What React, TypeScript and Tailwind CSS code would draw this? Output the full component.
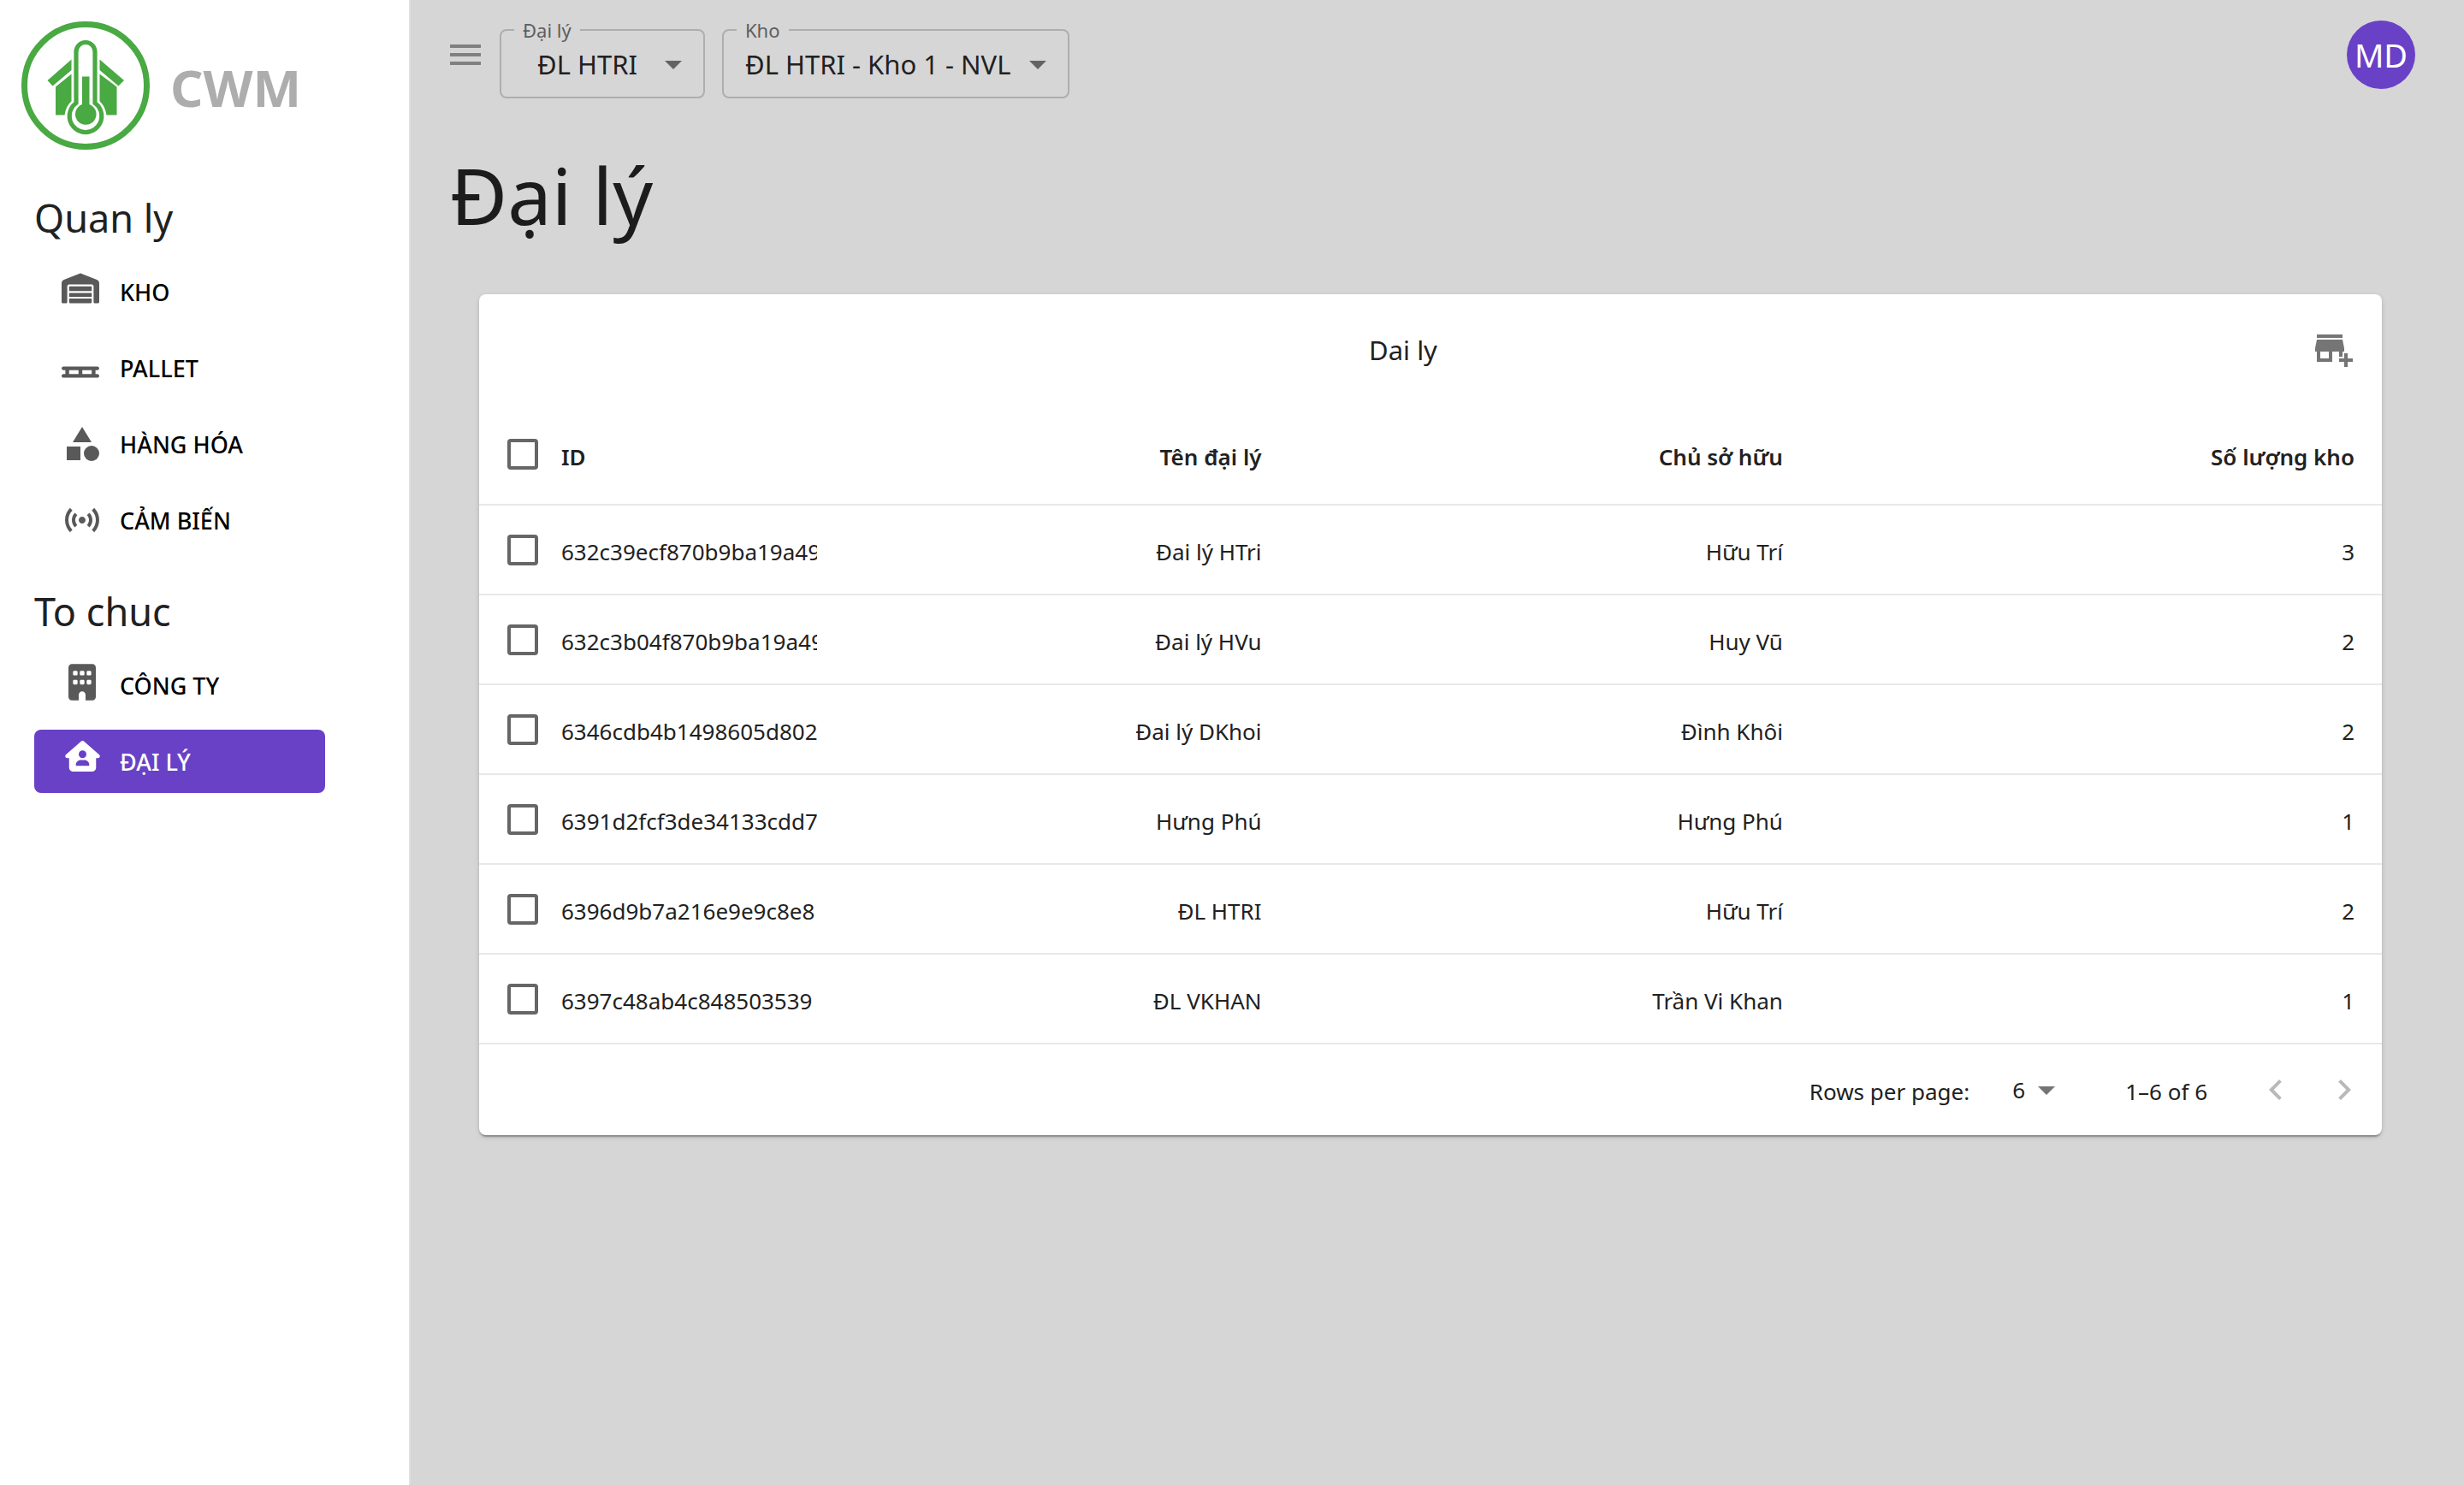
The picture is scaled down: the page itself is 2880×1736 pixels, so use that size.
import React, { useState } from "react";
import { FaBuilding, FaHouseUser, FaPallet, FaWarehouse } from "react-icons/fa6";
import {
  MdAddBusiness,
  MdArrowDropDown,
  MdCategory,
  MdKeyboardArrowLeft,
  MdKeyboardArrowRight,
  MdMenu,
  MdSensors,
} from "react-icons/md";

type NavItem = { label: string; icon: React.ReactNode; active?: boolean };

const manageItems: NavItem[] = [
  { label: "KHO", icon: <FaWarehouse className="mr-1 mb-2 h-9 w-[45px]" /> },
  { label: "PALLET", icon: <FaPallet className="mr-1 mb-3 h-9 w-[45px]" /> },
  { label: "HÀNG HÓA", icon: <MdCategory className="size-12" /> },
  { label: "CẢM BIẾN", icon: <MdSensors className="size-12" /> },
];

const orgItems: NavItem[] = [
  { label: "CÔNG TY", icon: <FaBuilding className="mb-2 h-[43px] w-8" /> },
  { label: "ĐẠI LÝ", icon: <FaHouseUser className="mb-3 h-9 w-[41px]" />, active: true },
];

const rows = [
  { id: "632c39ecf870b9ba19a49", name: "Đai lý HTri", owner: "Hữu Trí", count: 3 },
  { id: "632c3b04f870b9ba19a49", name: "Đai lý HVu", owner: "Huy Vũ", count: 2 },
  { id: "6346cdb4b1498605d802", name: "Đai lý DKhoi", owner: "Đình Khôi", count: 2 },
  { id: "6391d2fcf3de34133cdd7", name: "Hưng Phú", owner: "Hưng Phú", count: 1 },
  { id: "6396d9b7a216e9e9c8e8", name: "ĐL HTRI", owner: "Hữu Trí", count: 2 },
  { id: "6397c48ab4c848503539", name: "ĐL VKHAN", owner: "Trần Vi Khan", count: 1 },
];

function Logo() {
  return (
    <svg viewBox="0 0 150 150" className="size-[150px] shrink-0" aria-hidden="true">
      <circle cx="75" cy="75" r="71.5" fill="none" stroke="#49a942" strokeWidth="7" />
      <g fill="#49a942">
        <path d="M58.500 44.500V57L36.500 75.500 30.500 69z" />
        <path d="M91.500 44.500V57L113.500 75.500 120 69z" />
        <path d="M58.500 61.500V93.500C54 97.500 51.500 103 50.500 109.500H40V76.500z" />
        <path d="M91.500 61.500V93.500C96 97.500 98.500 103 99.500 109.500H111.500V76.500z" />
      </g>
      <path
        d="M64 95.500V35.500a11 11 0 0 1 22 0V95.500a18.800 18.800 0 1 1 -22 0z"
        fill="#fff"
        stroke="#fff"
        strokeWidth="10"
      />
      <path
        d="M64 95.500V35.500a11 11 0 0 1 22 0V95.500a18.800 18.800 0 1 1 -22 0z"
        fill="#fff"
        stroke="#49a942"
        strokeWidth="5.200"
      />
      <path d="M71 64.500h8.500V97a12.300 12.300 0 1 1 -8.500 0z" fill="#49a942" />
    </svg>
  );
}

function NavSection({ title, items }: { title: string; items: NavItem[] }) {
  return (
    <section>
      <h2 className="text-[45px] leading-[60px]">{title}</h2>
      <ul className="mt-[19px] flex flex-col gap-[15px]">
        {items.map((item) => (
          <li key={item.label}>
            <a
              href="#"
              className={
                item.active
                  ? "flex h-[74px] items-center gap-5 rounded-lg bg-[#6941c6] px-8 text-white"
                  : "flex h-[74px] items-center gap-5 rounded-lg px-8 text-black"
              }
            >
              <span
                className={
                  item.active
                    ? "flex w-12 justify-center text-white"
                    : "flex w-12 justify-center text-[#595959]"
                }
              >
                {item.icon}
              </span>
              <span className="pt-0.5 text-[27px] font-medium">{item.label}</span>
            </a>
          </li>
        ))}
      </ul>
    </section>
  );
}

function OutlinedSelect({
  id,
  label,
  value,
  className,
}: {
  id: string;
  label: string;
  value: string;
  className: string;
}) {
  return (
    <fieldset className="rounded-lg border-2 border-[#aeaeae] pb-3.5">
      <legend className="ml-[15px] px-2.5 text-[22px] leading-8 text-[#5e5e5e]">
        <label htmlFor={id}>{label}</label>
      </legend>
      <div className="relative">
        <select
          id={id}
          className={"h-12 appearance-none bg-transparent text-[31px] leading-[48px] " + className}
        >
          <option>{value}</option>
        </select>
        <MdArrowDropDown className="pointer-events-none absolute top-0 right-[11px] size-12 text-[#636363]" />
      </div>
    </fieldset>
  );
}

function CheckBox({ label }: { label: string }) {
  return (
    <input
      type="checkbox"
      aria-label={label}
      className="ml-[33px] block size-9 appearance-none rounded border-4 border-[#666666] checked:bg-[#6941c6]"
    />
  );
}

export default function App() {
  const [open, setOpen] = useState(true);

  return (
    <div className="flex min-h-screen bg-[#d6d6d6] font-['Noto_Sans',sans-serif] text-[#212121]">
      {open && (
        <aside className="w-[480px] shrink-0 border-r-2 border-[#e0e0e0] bg-white">
          <div className="flex items-center gap-6 pt-[25px] pl-[25px]">
            <Logo />
            <span className="pt-1 text-[60px] font-bold text-[#adadad]">CWM</span>
          </div>
          <nav className="mt-[50px] flex w-[380px] flex-col gap-10 pl-10">
            <NavSection title="Quan ly" items={manageItems} />
            <NavSection title="To chuc" items={orgItems} />
          </nav>
        </aside>
      )}

      <main className="min-w-0 flex-1">
        <header className="flex items-start pt-[19px] pr-[57px] pl-10">
          <button
            type="button"
            aria-label="Menu"
            onClick={() => setOpen(!open)}
            className="mt-[21px] mr-4 text-[#808080]"
          >
            <MdMenu className="size-12" />
          </button>
          <div className="flex gap-5">
            <OutlinedSelect id="agency" label="Đại lý" value="ĐL HTRI" className="w-[236px] pl-[42px]" />
            <OutlinedSelect
              id="warehouse"
              label="Kho"
              value="ĐL HTRI - Kho 1 - NVL"
              className="w-[402px] pl-[25px]"
            />
          </div>
          <button
            type="button"
            className="mt-[5px] ml-auto size-20 rounded-full bg-[#6941c6] text-[38px] text-white"
          >
            MD
          </button>
        </header>

        <h1 className="mt-[57px] pl-[46px] text-[92px] leading-[112px] text-[#1c1c1c]">Đại lý</h1>

        <section className="mt-[60px] mr-24 ml-20 rounded-lg bg-white shadow-[0_4px_2px_-2px_rgba(0,0,0,0.2),0_2px_2px_0_rgba(0,0,0,0.14),0_2px_6px_0_rgba(0,0,0,0.12)]">
          <div className="flex h-32 items-center pr-8 pl-12">
            <h2 className="flex-1 pt-0.5 pr-8 text-center text-[31px]">Dai ly</h2>
            <button type="button" aria-label="Thêm đại lý" className="mb-0.5 text-[#757575]">
              <MdAddBusiness className="size-12" />
            </button>
          </div>

          <table className="w-full table-fixed border-collapse text-[26px]">
            <colgroup>
              <col className="w-24" />
              <col className="w-[299px]" />
              <col className="w-[24.8%]" />
              <col className="w-[27.4%]" />
              <col />
            </colgroup>
            <thead>
              <tr className="h-[118px] border-b-2 border-[#e8e8e8]">
                <td>
                  <CheckBox label="Chọn tất cả" />
                </td>
                <th className="pt-2 text-left font-semibold">ID</th>
                <th className="pt-2 pr-8 text-right font-semibold">Tên đại lý</th>
                <th className="pt-2 pr-8 text-right font-semibold">Chủ sở hữu</th>
                <th className="pt-2 pr-8 text-right font-semibold">Số lượng kho</th>
              </tr>
            </thead>
            <tbody>
              {rows.map((row) => (
                <tr key={row.id} className="h-[105px] border-b-2 border-[#e8e8e8]">
                  <td>
                    <CheckBox label={row.id} />
                  </td>
                  <td className="overflow-hidden pt-1.5 whitespace-nowrap">{row.id}</td>
                  <td className="pt-1.5 pr-8 text-right">{row.name}</td>
                  <td className="pt-1.5 pr-8 text-right">{row.owner}</td>
                  <td className="pt-1.5 pr-8 text-right">{row.count}</td>
                </tr>
              ))}
            </tbody>
          </table>

          <div className="flex h-[106px] items-center justify-end pr-1 text-[26px]">
            <label htmlFor="page-size" className="pt-1">
              Rows per page:
            </label>
            <div className="relative ml-8">
              <select
                id="page-size"
                className="h-12 w-[82px] appearance-none bg-transparent pl-[18px] leading-[48px]"
              >
                <option>6</option>
              </select>
              <MdArrowDropDown className="pointer-events-none absolute top-0 right-0 size-12 text-[#757575]" />
            </div>
            <span className="ml-[68px] pt-1">1–6 of 6</span>
            <div className="ml-10 flex text-[#b9b9b9]">
              <button type="button" aria-label="Trang trước" className="px-4">
                <MdKeyboardArrowLeft className="size-12" />
              </button>
              <button type="button" aria-label="Trang sau" className="px-4">
                <MdKeyboardArrowRight className="size-12" />
              </button>
            </div>
          </div>
        </section>
      </main>
    </div>
  );
}
